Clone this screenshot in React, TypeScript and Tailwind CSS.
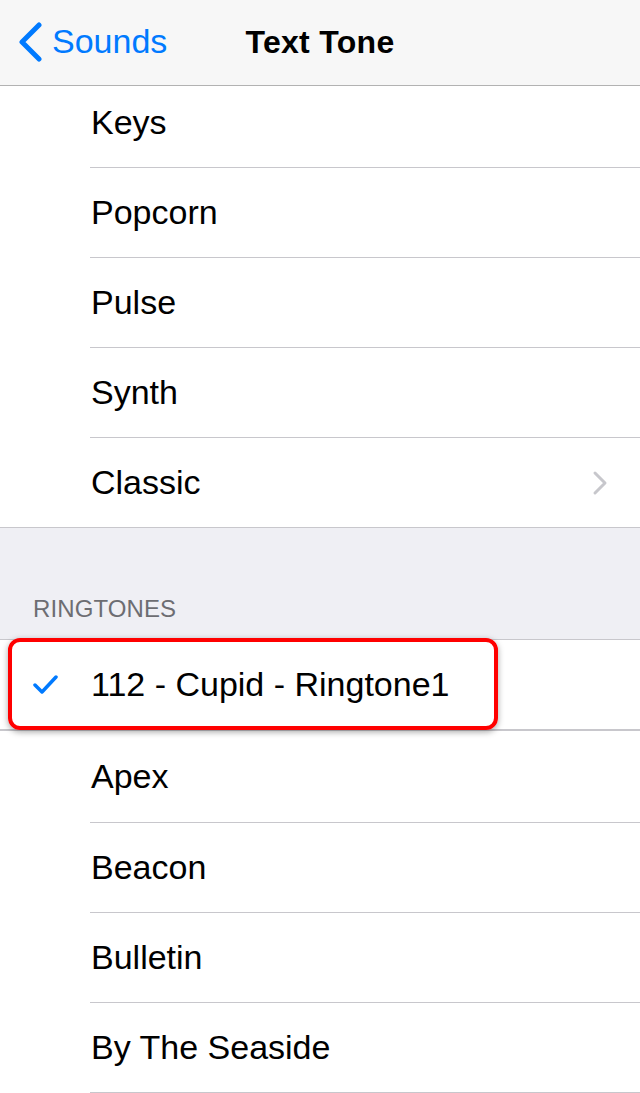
const topTones = ["Popcorn", "Pulse", "Synth"];
const ringtones = ["Beacon", "Bulletin", "By The Seaside"];

function Row({ label, tall = false }: { label: string; tall?: boolean }) {
    return (
        <div className={tall ? "flex h-[91px] items-center pl-[91px]" : "flex h-[89px] items-center pl-[91px]"}>
            <span className="text-[34px] text-black">{label}</span>
        </div>
    );
}

function Separator({ inset = true }: { inset?: boolean }) {
    return <div className={inset ? "ml-[90px] h-px bg-[#c8c7cc]" : "h-px bg-[#c8c7cc]"} />;
}

export default function App() {
    return (
        <div className="w-[640px] h-[1093px] overflow-hidden bg-white" style={{ fontFamily: "'Liberation Sans', Arial, sans-serif" }}>
            {/* nav bar */}
            <div className="relative flex h-[86px] items-center bg-[#f7f7f7] border-b border-[#b2b2b2]">
                <div className="flex items-center pl-[17px] pb-[2px] text-[#007aff]">
                    <svg width="26" height="40" viewBox="0 0 26 40" fill="none">
                        <path d="M22 3 L5 20 L22 37" stroke="currentColor" strokeWidth="5" strokeLinecap="round" strokeLinejoin="round" />
                    </svg>
                    <span className="ml-[9px] text-[34px]">Sounds</span>
                </div>
                <div className="absolute inset-x-0 pb-[2px] text-center text-[32px] font-bold tracking-[0.3px] text-black pointer-events-none">Text Tone</div>
            </div>

            {/* first section */}
            <div className="flex h-[81px] items-center pl-[91px] pb-[8px]">
                <span className="text-[34px] text-black">Keys</span>
            </div>
            <Separator />
            {topTones.map((t) => (
                <div key={t}>
                    <Row label={t} />
                    <Separator />
                </div>
            ))}
            <div className="flex h-[89px] items-center pl-[91px] pr-[32px]">
                <span className="flex-1 text-[34px] text-black">Classic</span>
                <svg width="16" height="26" viewBox="0 0 16 26" fill="none" className="text-[#c7c7cc]">
                    <path d="M3 3 L13 13 L3 23" stroke="currentColor" strokeWidth="3" strokeLinecap="round" strokeLinejoin="round" />
                </svg>
            </div>
            <Separator inset={false} />

            {/* ringtones header */}
            <div className="flex h-[111px] items-end bg-[#efeff4] pl-[33px] pb-[18px]">
                <span className="text-[24px] leading-none tracking-[0.1px] text-[#6d6d72]">RINGTONES</span>
            </div>
            <Separator inset={false} />

            {/* selected row */}
            <div className="relative flex h-[89px] items-center">
                <svg className="ml-[33px] text-[#007aff]" width="25" height="21" viewBox="0 0 25 21" fill="none">
                    <path d="M2 11 L9 18 L23 3" stroke="currentColor" strokeWidth="3.5" strokeLinecap="round" strokeLinejoin="round" />
                </svg>
                <span className="ml-[33px] text-[34px] text-black">112 - Cupid - Ringtone1</span>
                <div className="absolute left-[8px] top-[-2px] h-[92px] w-[490px] rounded-[12px] border-[4px] border-[#ff0000] shadow-[0_2px_6px_rgba(0,0,0,0.35)]" />
            </div>
            <div className="h-[2px] bg-[#c8c7cc]" />

            <Row label="Apex" tall />
            <Separator />
            {ringtones.map((t) => (
                <div key={t}>
                    <Row label={t} />
                    <Separator />
                </div>
            ))}
        </div>
    );
}
